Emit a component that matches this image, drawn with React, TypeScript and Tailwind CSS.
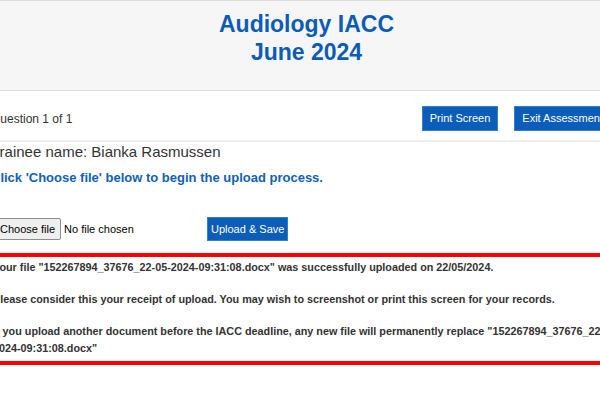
export default function App() {
  return (
    <div className="w-[600px] h-[400px] overflow-hidden bg-white font-['Liberation_Sans',Arial,sans-serif] text-[#333333]">
      <div className="-ml-[9px] w-[631px]">
        {/* page header */}
        <div className="border-y border-[#dddddd] bg-[#f6f6f6] pt-[9px] pb-[24px] text-center">
          <h1 className="text-[23px] leading-[28px] font-bold text-[#0b5cb6]">
            Audiology IACC
            <br />
            June 2024
          </h1>
        </div>

        {/* question bar */}
        <div className="flex items-center justify-between pt-[15px] pb-[9px] pr-[11px] border-b-2 border-[#eeeeee]">
          <div className="text-[12px] leading-[14px] pt-[1px]">Question 1 of 1</div>
          <div className="flex gap-[16px]">
            <button className="h-[25px] px-[7px] bg-[#0a5db8] border border-[#3a7cc4] text-white text-[11px]">
              Print Screen
            </button>
            <button className="h-[25px] px-[7px] bg-[#0a5db8] border border-[#3a7cc4] text-white text-[11px]">
              Exit Assessment
            </button>
          </div>
        </div>

        <div className="mt-[1px] text-[15px] leading-[17px]">Trainee name: Bianka Rasmussen</div>
        <div className="mt-[10px] text-[13px] leading-[15px] font-bold text-[#1161b5]">
          Click 'Choose file' below to begin the upload process.
        </div>

        {/* upload row */}
        <div className="mt-[32px] flex items-center">
          <div className="ml-[3px] w-[213px] flex items-center">
            <span className="h-[22px] px-[5px] flex items-center bg-[#efefef] border border-[#8d8d8d] rounded-[2px] text-[11px] text-black">
              Choose file
            </span>
            <span className="ml-[3px] text-[11px] text-black">No file chosen</span>
          </div>
          <button className="h-[24px] px-[3px] bg-[#0a5db8] border border-[#3a7cc4] text-white text-[11px]">
            Upload &amp; Save
          </button>
        </div>

        {/* receipt box */}
        <div className="mt-[12px] border-y-4 border-[#ff0000] pt-[2px] pb-[4px] pl-[2px] text-[10.8px] leading-[17px] font-bold text-[#333333] whitespace-nowrap">
          <p>Your file "152267894_37676_22-05-2024-09:31:08.docx" was successfully uploaded on 22/05/2024.</p>
          <p className="mt-[15px]">
            Please consider this your receipt of upload. You may wish to screenshot or print this screen for your records.
          </p>
          <p className="mt-[15px]">
            If you upload another document before the IACC deadline, any new file will permanently replace "152267894_37676_22-05-
            <br />
            2024-09:31:08.docx"
          </p>
        </div>
      </div>
    </div>
  );
}
